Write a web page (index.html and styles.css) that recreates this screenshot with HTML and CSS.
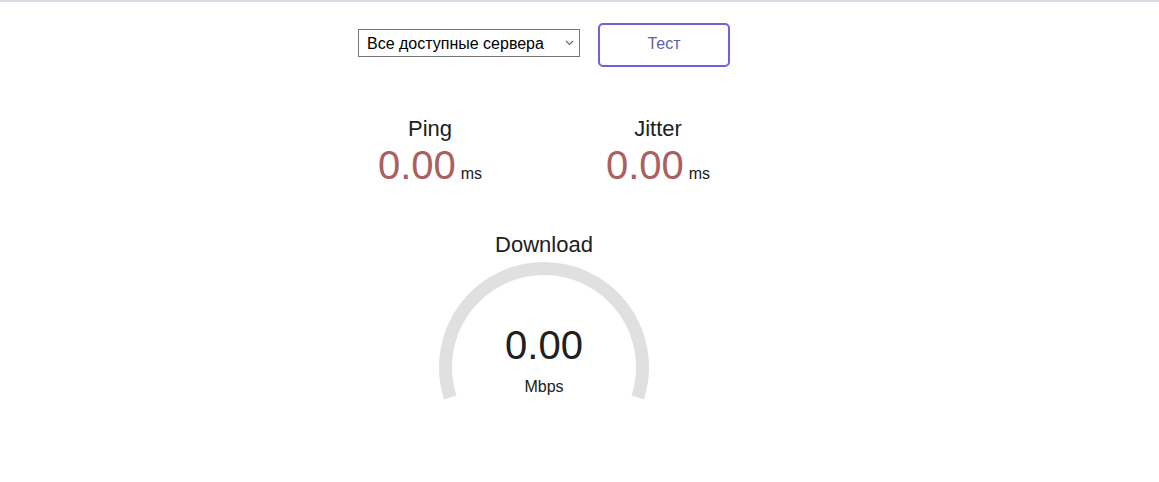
FILE: index.html
```html
<!DOCTYPE html>
<html lang="ru">
<head>
<meta charset="utf-8">
<title>Speedtest</title>
<link rel="stylesheet" href="styles.css">
</head>
<body>
<div class="topline"></div>
<main class="page">
  <div class="controls">
    <span class="select-wrap">
      <select class="server-select">
        <option>Все доступные сервера</option>
      </select>
      <svg class="chevron" width="9" height="6" viewBox="0 0 9 6"><path d="M1 1 L4.5 4.5 L8 1" fill="none" stroke="#6a6a6a" stroke-width="1.2"/></svg>
    </span>
    <button class="start-btn">Тест</button>
  </div>

  <div class="metrics">
    <div class="metric">
      <div class="metric-name">Ping</div>
      <div class="metric-value"><span class="num">0.00</span><span class="unit">ms</span></div>
    </div>
    <div class="metric">
      <div class="metric-name">Jitter</div>
      <div class="metric-value"><span class="num">0.00</span><span class="unit">ms</span></div>
    </div>
  </div>

  <div class="download">
    <div class="metric-name">Download</div>
    <div class="gauge">
      <svg class="gauge-svg" width="220" height="145" viewBox="0 0 220 145">
        <path d="M 16.32 139.44 A 98.5 98.5 0 1 1 203.68 139.44" fill="none" stroke="#e0e0e0" stroke-width="13"/>
      </svg>
      <div class="gauge-readout">
        <div class="gauge-value">0.00</div>
        <div class="gauge-unit">Mbps</div>
      </div>
    </div>
  </div>
</main>
</body>
</html>
```

FILE: styles.css
```css
html, body {
  margin: 0;
  padding: 0;
  background: #ffffff;
}

body {
  font-family: "Liberation Sans", Arial, sans-serif;
  color: #202020;
  font-size: 16px;
}

.topline {
  height: 2px;
  background: #d6dee7;
}

.page {
  width: 1088px;
  display: flex;
  flex-direction: column;
  align-items: center;
}

.controls {
  display: flex;
  align-items: flex-start;
  gap: 18px;
  padding-top: 21px;
}

.select-wrap {
  position: relative;
  display: block;
  margin-top: 6px;
}

.server-select {
  appearance: none;
  -webkit-appearance: none;
  display: block;
  box-sizing: border-box;
  width: 222px;
  height: 28px;
  margin: 0;
  padding: 0 20px 0 8px;
  border: 1px solid #767676;
  border-radius: 0;
  background: #ffffff;
  color: #000000;
  font-family: "Liberation Sans", Arial, sans-serif;
  font-size: 16px;
}

.chevron {
  position: absolute;
  right: 6px;
  top: 11px;
  pointer-events: none;
}

.start-btn {
  box-sizing: border-box;
  width: 132px;
  height: 44px;
  margin: 0;
  padding: 0 0 2px 0;
  border: 2px solid #6c62e2;
  border-radius: 5px;
  background: transparent;
  color: #6060aa;
  font-family: "Liberation Sans", Arial, sans-serif;
  font-size: 16px;
  line-height: 38px;
  cursor: pointer;
}

.metrics {
  display: flex;
  margin-top: 49px;
}

.metric {
  width: 228px;
  display: flex;
  flex-direction: column;
  align-items: center;
}

.metric-name {
  font-size: 22px;
  line-height: 26px;
}

.metric-value {
  display: flex;
  align-items: baseline;
  line-height: 46px;
}

.num {
  font-size: 40px;
  color: #aa6060;
}

.unit {
  font-size: 16px;
  margin-left: 5px;
}

.download {
  display: flex;
  flex-direction: column;
  align-items: center;
  margin-top: 35px;
}

.gauge {
  position: relative;
  width: 220px;
  height: 145px;
}

.gauge-svg {
  display: block;
}

.gauge-readout {
  position: absolute;
  left: 0;
  right: 0;
  top: 63px;
  display: flex;
  flex-direction: column;
  align-items: center;
}

.gauge-value {
  font-size: 40px;
  line-height: 48px;
}

.gauge-unit {
  font-size: 16px;
  line-height: 20px;
  margin-top: 8px;
}
```
